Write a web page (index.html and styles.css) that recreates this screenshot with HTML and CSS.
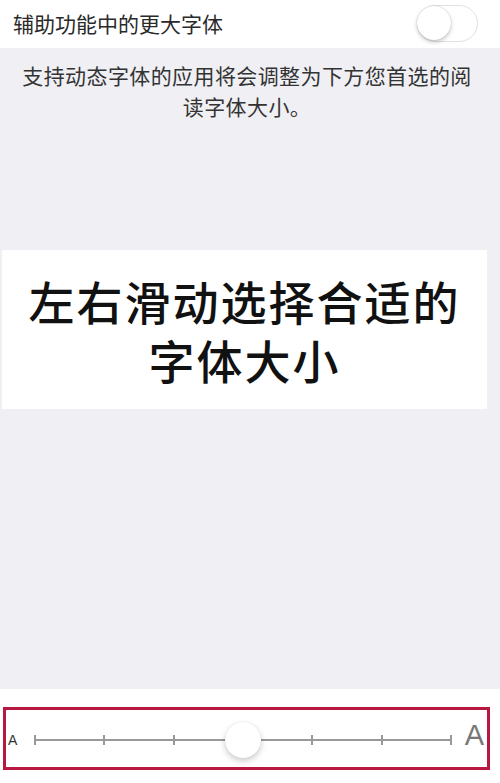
FILE: index.html
```html
<!DOCTYPE html>
<html lang="zh-CN">
<head>
    <meta charset="UTF-8">
    <title>更大字体</title>
    <link rel="stylesheet" href="styles.css">
</head>
<body>
    <div class="setting-row">
        <span class="setting-label">辅助功能中的更大字体</span>
        <div class="switch"><div class="switch-knob"></div></div>
    </div>

    <div class="preview">
        <p class="preview-note">支持动态字体的应用将会调整为下方您首选的阅读字体大小。</p>
        <div class="caption-box">
            <p class="caption">左右滑动选择合适的</p>
            <p class="caption">字体大小</p>
        </div>
    </div>

    <div class="slider-panel">
        <div class="slider-frame">
            <span class="size-a small">A</span>
            <div class="track">
                <span class="tick"></span>
                <span class="tick"></span>
                <span class="tick"></span>
                <span class="tick"></span>
                <span class="tick"></span>
                <span class="tick"></span>
                <span class="tick"></span>
                <div class="thumb"></div>
            </div>
            <span class="size-a big">A</span>
        </div>
    </div>
</body>
</html>
```

FILE: styles.css
```css
/* Ajustes: tamaño de letra */
body {
    margin: 0;
    width: 500px;
    height: 783px;
    display: flex;
    flex-direction: column;
    background-color: #efeff4;
    font-family: "Noto Sans CJK SC", "Liberation Sans", sans-serif;
    color: #222;
}

.setting-row {
    height: 48px;
    background-color: white;
    display: flex;
    align-items: center;
    justify-content: space-between;
    padding: 0 22px 0 13px;
}

.setting-label {
    font-size: 21px;
    color: #2a2a2a;
    margin-top: -2px;
}

.switch {
    width: 59px;
    height: 35px;
    border: 1px solid #e2e2e2;
    border-radius: 19px;
    position: relative;
    margin-top: -1px;
}

.switch-knob {
    position: absolute;
    left: -1px;
    top: 0;
    width: 34px;
    height: 34px;
    border-radius: 50%;
    background: white;
    box-shadow: 0 2px 4px rgba(0,0,0,0.22), 0 0 1px rgba(0,0,0,0.25);
}

.preview {
    flex-grow: 1;
    display: flex;
    flex-direction: column;
    align-items: center;
}

.preview-note {
    margin: 12px 0 0 -6px;
    width: 456px;
    text-align: center;
    font-size: 21px;
    letter-spacing: 0.4px;
    line-height: 31px;
    color: #333;
}

.caption-box {
    margin-top: 128px;
    width: 485px;
    height: 159px;
    margin-left: -11px;
    background-color: white;
    display: flex;
    flex-direction: column;
    align-items: center;
    justify-content: center;
}

.caption {
    margin: 0;
    height: 59px;
    text-align: center;
    font-size: 46px;
    font-weight: 500;
    line-height: 59px;
    color: #111;
    letter-spacing: 2px;
}

.slider-panel {
    height: 94px;
    background-color: white;
    padding-top: 18px;
    box-sizing: border-box;
}

.slider-frame {
    margin-left: 3px;
    width: 481px;
    height: 57px;
    border: 3px solid #b8173f;
    display: flex;
    align-items: center;
}

.size-a {
    font-family: "Liberation Sans", sans-serif;
}

.size-a.small {
    width: 26px;
    padding-left: 2px;
    font-size: 14px;
    color: #333;
    margin-top: 2px;
}

.size-a.big {
    width: 32px;
    padding-right: 3px;
    text-align: right;
    font-size: 29px;
    color: #777;
    margin-top: -6px;
}

.track {
    position: relative;
    flex-grow: 1;
    height: 2px;
    background-color: #999;
    display: flex;
    justify-content: space-between;
    margin-top: 2px;
}

.tick {
    width: 2px;
    height: 10px;
    margin-top: -4px;
    background-color: #999;
}

.thumb {
    position: absolute;
    left: 50%;
    top: 50%;
    width: 36px;
    height: 36px;
    margin: -18px 0 0 -18px;
    border-radius: 50%;
    background: white;
    box-shadow: 0 3px 6px rgba(0,0,0,0.2), 0 0 1px rgba(0,0,0,0.15);
}
```
